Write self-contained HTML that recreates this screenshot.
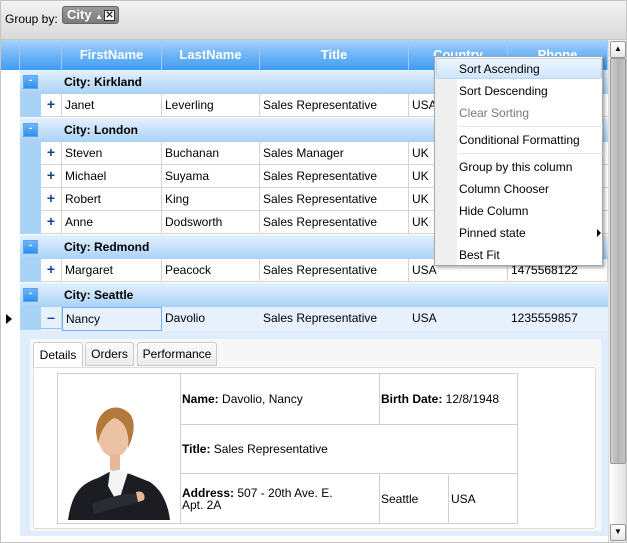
<!DOCTYPE html>
<html><head><style>
*{margin:0;padding:0;box-sizing:border-box}
body{width:627px;height:543px;overflow:hidden;background:#fff;font-family:"Liberation Sans",Arial,sans-serif;font-size:12px;color:#000;position:relative}
.a{position:absolute}
.top{left:0;top:0;width:627px;height:40px;background:linear-gradient(#f4f4f4,#d9d9d9);border-bottom:1px solid #c8c8c8}
.hdr{top:40px;height:30px;background:linear-gradient(#a9d3fb 0%,#7dbdf8 35%,#3f9cf2 100%);color:#fff;font-weight:bold;font-size:13px;text-align:center;line-height:30px;border-right:1px solid #9cc9f5}
.grp{left:20px;width:588px;height:24px;background:linear-gradient(#e4f1fd,#a9d2f7);font-weight:bold;line-height:24px}
.grp b{position:absolute;left:44px;top:0}
.gb{position:absolute;left:3px;top:5px;width:15px;height:14px;background:linear-gradient(#6fb6f7,#2f8ef0);border:1px solid #5aa6ef;color:#fff;font-size:10px;line-height:10px;text-align:center}
.row{left:20px;width:588px;height:23px;background:#fff;border-bottom:1px solid #d4d4d4}
.row .e{position:absolute;left:0;top:0;width:21px;height:23px;background:#a9d2f7}
.row .p{position:absolute;left:21px;top:0;width:21px;height:22px;color:#163d8f;font-weight:bold;font-size:14px;text-align:center;line-height:21px;border-right:1px solid #d4d4d4}
.c{position:absolute;top:0;height:22px;line-height:22px;padding-left:3px;border-right:1px solid #d4d4d4;white-space:nowrap;overflow:hidden}
.menu{left:434px;top:56px;width:169px;height:210px;background:#fff;border:1px solid #a6a6a6;box-shadow:2px 2px 3px rgba(0,0,0,.3)}
.menu .m{position:absolute;left:24px;font-size:12px}
.sep{position:absolute;left:24px;width:144px;height:1px;background:#e4e4e4}
.dt td{border:1px solid #cfcfcf;vertical-align:middle;padding-left:1px;font-size:12px}
</style></head><body>
<div class="a top"></div>
<div class="a" style="left:5px;top:12px;font-size:12px">Group by:</div>
<div class="a" style="left:62px;top:6px;width:57px;height:18px;background:linear-gradient(#9a9a9a,#7a7a7a);border:1px solid #666;border-radius:3px;color:#fff;font-weight:bold;font-size:13px;line-height:16px;padding-left:4px">City <span style="font-size:8px">▲</span><span style="display:inline-block;width:11px;height:11px;background:#fff;color:#333;font-size:10px;line-height:10px;text-align:center;border:1px solid #333;vertical-align:1px;margin-left:1px">✕</span></div>

<div class="a hdr" style="left:0;width:20px"></div>
<div class="a hdr" style="left:20px;width:42px"></div>
<div class="a hdr" style="left:62px;width:100px">FirstName</div>
<div class="a hdr" style="left:162px;width:98px">LastName</div>
<div class="a hdr" style="left:260px;width:149px">Title</div>
<div class="a hdr" style="left:409px;width:99px">Country</div>
<div class="a hdr" style="left:508px;width:100px">Phone</div>

<div class="a grp" style="top:70px"><div class="gb">-</div><b>City: Kirkland</b></div>
<div class="a row" style="top:94px"><div class="e"></div><div class="p">+</div><div class="c" style="left:42px;width:100px">Janet</div><div class="c" style="left:142px;width:98px">Leverling</div><div class="c" style="left:240px;width:149px">Sales Representative</div><div class="c" style="left:389px;width:99px">USA</div></div>
<div class="a grp" style="top:118px"><div class="gb">-</div><b>City: London</b></div>
<div class="a row" style="top:142px"><div class="e"></div><div class="p">+</div><div class="c" style="left:42px;width:100px">Steven</div><div class="c" style="left:142px;width:98px">Buchanan</div><div class="c" style="left:240px;width:149px">Sales Manager</div><div class="c" style="left:389px;width:99px">UK</div></div>
<div class="a row" style="top:165px"><div class="e"></div><div class="p">+</div><div class="c" style="left:42px;width:100px">Michael</div><div class="c" style="left:142px;width:98px">Suyama</div><div class="c" style="left:240px;width:149px">Sales Representative</div><div class="c" style="left:389px;width:99px">UK</div></div>
<div class="a row" style="top:188px"><div class="e"></div><div class="p">+</div><div class="c" style="left:42px;width:100px">Robert</div><div class="c" style="left:142px;width:98px">King</div><div class="c" style="left:240px;width:149px">Sales Representative</div><div class="c" style="left:389px;width:99px">UK</div></div>
<div class="a row" style="top:211px"><div class="e"></div><div class="p">+</div><div class="c" style="left:42px;width:100px">Anne</div><div class="c" style="left:142px;width:98px">Dodsworth</div><div class="c" style="left:240px;width:149px">Sales Representative</div><div class="c" style="left:389px;width:99px">UK</div></div>
<div class="a grp" style="top:235px"><div class="gb">-</div><b>City: Redmond</b></div>
<div class="a row" style="top:259px"><div class="e"></div><div class="p">+</div><div class="c" style="left:42px;width:100px">Margaret</div><div class="c" style="left:142px;width:98px">Peacock</div><div class="c" style="left:240px;width:149px">Sales Representative</div><div class="c" style="left:389px;width:99px">USA</div><div class="c" style="left:488px;width:100px">1475568122</div></div>
<div class="a grp" style="top:283px"><div class="gb">-</div><b>City: Seattle</b></div>
<div class="a" style="left:6px;top:314px;width:0;height:0;border-top:5px solid transparent;border-bottom:5px solid transparent;border-left:6px solid #000"></div>
<div class="a row" style="top:307px;background:#e6f1fd;border-bottom:none;height:24px"><div class="e"></div><div class="p" style="background:#e6f1fd;border-bottom:1px solid #8fc3f4">–</div><div class="c" style="left:42px;width:100px;border:1px solid #6fb1f0;height:24px;top:0">Nancy</div><div class="c" style="left:142px;width:98px;border-right-color:#e6f1fd">Davolio</div><div class="c" style="left:240px;width:149px;border-right-color:#e6f1fd">Sales Representative</div><div class="c" style="left:389px;width:99px;border-right-color:#e6f1fd">USA</div><div class="c" style="left:488px;width:100px;border-right-color:#e6f1fd">1235559857</div></div>

<div class="a" style="left:20px;top:331px;width:588px;height:205px;background:#dfecfb"></div>
<div class="a" style="left:30px;top:339px;width:571px;height:192px;background:#f7f7f7"></div>
<div class="a" style="left:33px;top:342px;width:50px;height:26px;background:#fff;border:1px solid #ccc;border-bottom:none;border-radius:3px 3px 0 0;text-align:center;line-height:24px">Details</div>
<div class="a" style="left:85px;top:342px;width:49px;height:24px;background:linear-gradient(#fafafa,#ececec);border:1px solid #ccc;border-radius:3px 3px 0 0;text-align:center;line-height:22px">Orders</div>
<div class="a" style="left:137px;top:342px;width:80px;height:24px;background:linear-gradient(#fafafa,#ececec);border:1px solid #ccc;border-radius:3px 3px 0 0;text-align:center;line-height:22px">Performance</div>
<div class="a" style="left:33px;top:367px;width:563px;height:162px;background:#fff;border:1px solid #ddd;border-radius:3px"></div>
<table class="a dt" style="left:57px;top:373px;border-collapse:collapse;width:461px;height:149px">
<tr style="height:50px"><td rowspan="3" style="width:123px;padding:0"><svg width="121" height="146" viewBox="0 0 121 146"><path d="M10 146 C14 120 22 110 40 104 L55 96 L72 100 L92 108 C104 116 110 130 112 146Z" fill="#1b1d22"/><path d="M52 96 L70 98 L60 130 L50 112Z" fill="#f4f4f4"/><path d="M34 130 C50 124 66 118 80 120 L82 128 C66 132 50 136 36 140Z" fill="#2a2c33"/><path d="M78 118 C84 116 88 120 86 126 L80 128Z" fill="#e6b79a"/><ellipse cx="56" cy="62" rx="16" ry="21" fill="#ecc2a4"/><path d="M38 58 C38 36 58 26 72 40 C78 48 76 62 70 74 C72 58 66 46 56 44 C48 48 42 58 40 70Z" fill="#b3793c"/><rect x="52" y="80" width="10" height="16" fill="#e6b79a"/></svg></td><td style="width:199px"><b>Name:</b> Davolio, Nancy</td><td style="width:138px"><b>Birth Date:</b> 12/8/1948</td></tr>
<tr style="height:49px"><td colspan="2"><b>Title:</b> Sales Representative</td></tr>
<tr style="height:49px"><td style="line-height:12px"><b>Address:</b> 507 - 20th Ave. E.<br>Apt. 2A</td><td style="padding:0"><div style="display:flex;height:48px;align-items:center"><div style="width:69px;height:48px;border-right:1px solid #cfcfcf;line-height:48px;padding-left:1px">Seattle</div><div style="padding-left:2px">USA</div></div></td></tr>
</table>

<div class="a" style="left:608px;top:40px;width:19px;height:503px;background:#f0f0f0;border-left:1px solid #ddd"></div>
<div class="a" style="left:610px;top:41px;width:16px;height:17px;background:linear-gradient(#fff,#e6e6e6);border:1px solid #999;border-radius:2px;font-size:8px;text-align:center;line-height:14px">▲</div>
<div class="a" style="left:610px;top:58px;width:16px;height:406px;background:linear-gradient(90deg,#d0d0d0,#b4b4b4,#c4c4c4);border:1px solid #999;border-radius:2px"></div>
<div class="a" style="left:610px;top:464px;width:16px;height:60px;background:linear-gradient(90deg,#fff,#e0e0e0)"></div>
<div class="a" style="left:610px;top:524px;width:16px;height:17px;background:linear-gradient(#fff,#e6e6e6);border:1px solid #999;border-radius:2px;font-size:8px;text-align:center;line-height:14px">▼</div>

<div class="a menu">
<div class="a" style="left:0;top:0;width:22px;height:208px;background:#efefef"></div>
<div class="a" style="left:1px;top:1px;width:166px;height:21px;background:linear-gradient(#eef6fe,#cfe5fb);border:1px solid #b8d7f6;border-radius:2px"></div>
<div class="m" style="top:5px">Sort Ascending</div>
<div class="m" style="top:27px">Sort Descending</div>
<div class="m" style="top:49px;color:#777">Clear Sorting</div>
<div class="sep" style="top:69px"></div>
<div class="m" style="top:76px">Conditional Formatting</div>
<div class="sep" style="top:96px"></div>
<div class="m" style="top:103px">Group by this column</div>
<div class="m" style="top:125px">Column Chooser</div>
<div class="m" style="top:147px">Hide Column</div>
<div class="m" style="top:169px">Pinned state</div>
<div class="a" style="left:162px;top:172px;border-top:4px solid transparent;border-bottom:4px solid transparent;border-left:4px solid #000"></div>
<div class="m" style="top:191px">Best Fit</div>
</div>
<div class="a" style="left:0;top:0;width:627px;height:543px;border:1px solid #c4c4c4"></div>
</body></html>
